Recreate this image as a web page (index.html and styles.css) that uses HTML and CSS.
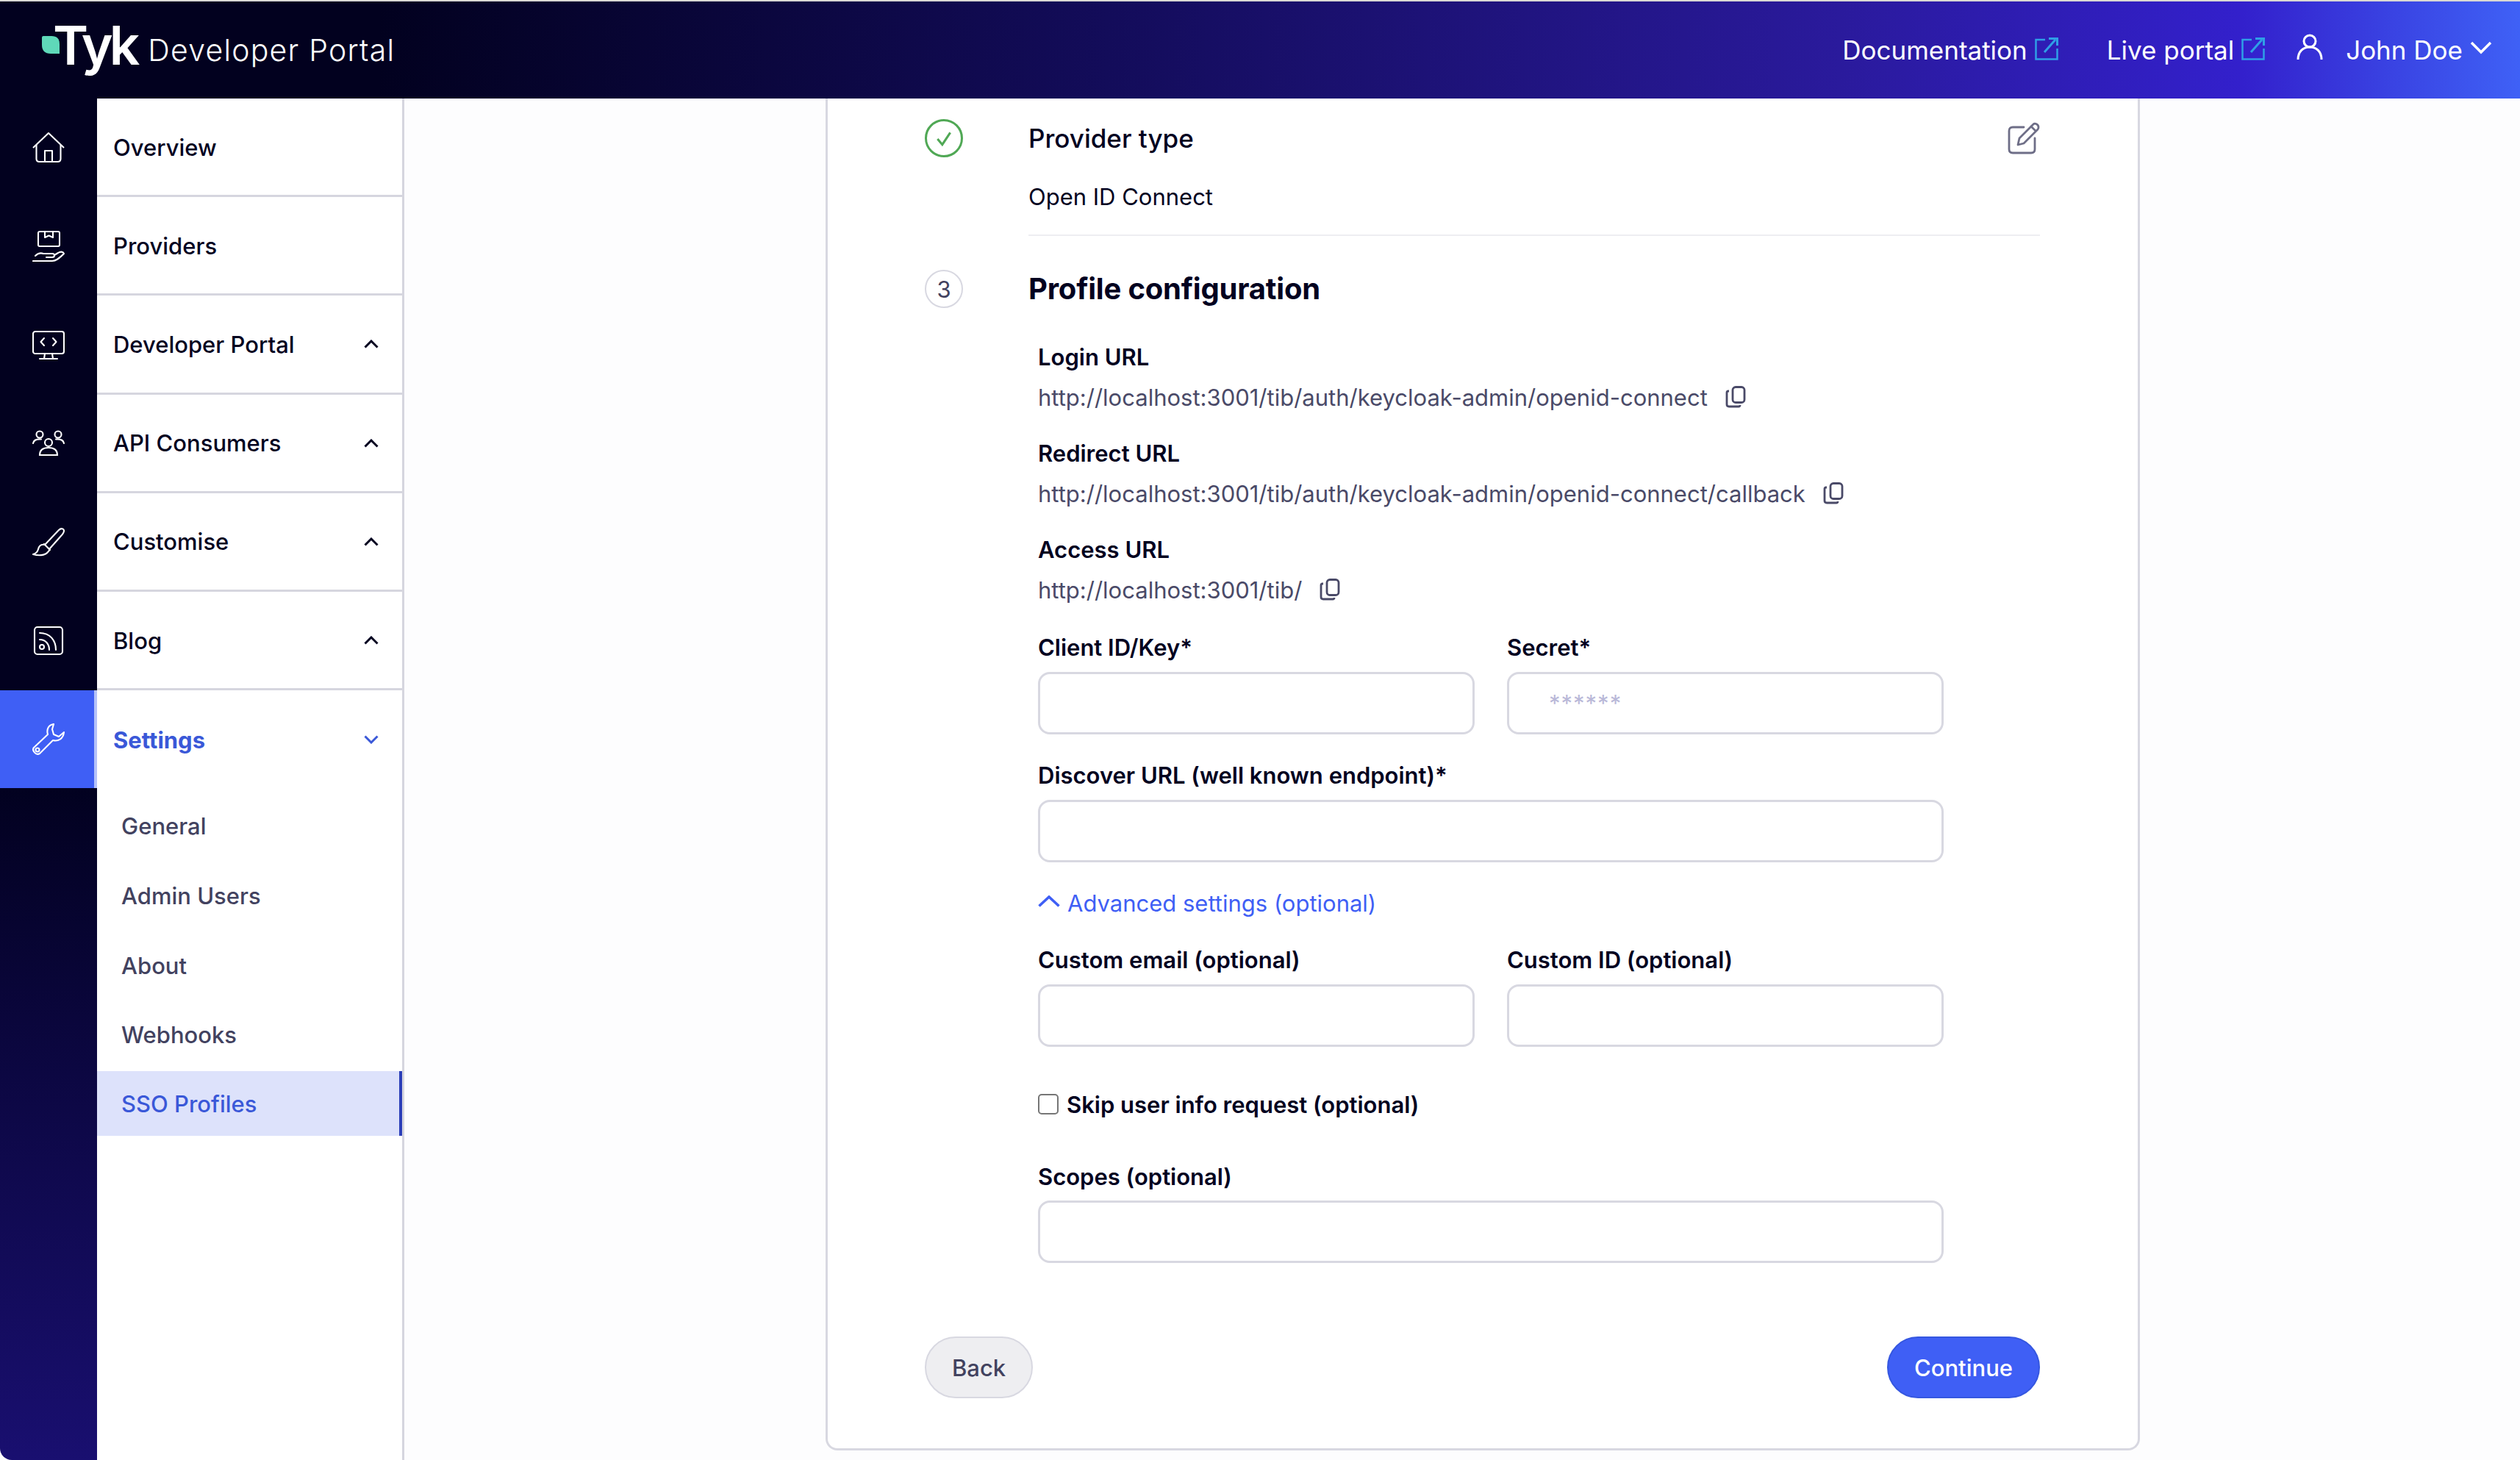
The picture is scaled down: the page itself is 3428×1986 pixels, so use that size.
FILE: index.html
```html
<!DOCTYPE html>
<html lang="en">
<head>
<meta charset="UTF-8">
<title>Tyk Developer Portal</title>
<link rel="stylesheet" href="styles.css">
</head>
<body>

<!-- TOP BAR -->
<header class="topbar">
    <div class="logo">
        <svg class="logo-leaf" viewBox="0 0 24 24"><path d="M0 2 Q0 0 2 0 H13 Q24 0 24 11 V24 H12 Q0 24 0 12 Z" fill="#5fd9b9"/></svg>
        <span class="logo-tyk">Tyk</span>
        <span class="logo-name">Developer Portal</span>
    </div>
    <nav class="top-links">
        <a class="top-link">Documentation
            <svg class="ext-icon" viewBox="0 0 32 32"><path d="M14 4 H1.5 V30.500 H30.500 V16" fill="none" stroke="#2f9fe6" stroke-width="2.500"/><path d="M13 21 L28 4 M19 2.500 H30.500 V12" fill="none" stroke="#2f9fe6" stroke-width="3"/></svg>
        </a>
        <a class="top-link">Live portal
            <svg class="ext-icon" viewBox="0 0 32 32"><path d="M14 4 H1.5 V30.500 H30.500 V16" fill="none" stroke="#2f9fe6" stroke-width="2.500"/><path d="M13 21 L28 4 M19 2.500 H30.500 V12" fill="none" stroke="#2f9fe6" stroke-width="3"/></svg>
        </a>
        <a class="top-user">
            <svg class="user-icon" viewBox="0 0 36 36"><circle cx="18" cy="10" r="8" fill="none" stroke="#fff" stroke-width="3"/><path d="M2 35 C2 24 9 18 18 18 C27 18 34 24 34 35" fill="none" stroke="#fff" stroke-width="3"/></svg>
            <span>John Doe</span>
            <svg class="user-chevron" viewBox="0 0 30 18"><path d="M2 2 L15 15 L28 2" fill="none" stroke="#fff" stroke-width="3.500"/></svg>
        </a>
    </nav>
</header>

<div class="app">

    <!-- ICON RAIL -->
    <aside class="rail">
        <div class="rail-item">
            <svg viewBox="0 0 44 44"><g fill="none" stroke="#fff" stroke-width="2.100" stroke-linejoin="round"><path d="M1 22 L22 2 L43 22"/><path d="M5.500 18 V37 Q5.500 41 9.500 41 H34.500 Q38.500 41 38.500 37 V18"/><path d="M17 41 V26 H27 V41"/></g></svg>
        </div>
        <div class="rail-item">
            <svg viewBox="0 0 44 44"><g fill="none" stroke="#fff" stroke-width="2.100" stroke-linejoin="round" stroke-linecap="round"><rect x="8" y="2" width="29" height="20" rx="2"/><path d="M17 3 V10 L22.500 7.500 L28 10 V3"/><path d="M1 42 H27 C32 42 36 39 43 32 C42 29 38 29 35 31 L30 34"/><path d="M4 35 C8 31 12 31 15 32 H27 C31 32 31 37 27 37 H19"/></g></svg>
        </div>
        <div class="rail-item">
            <svg viewBox="0 0 44 44"><g fill="none" stroke="#fff" stroke-width="2.100" stroke-linejoin="round" stroke-linecap="round"><rect x="1" y="4" width="42" height="30" rx="3"/><path d="M16 13 L11.500 18 L16 23 M28 13 L32.500 18 L28 23"/><path d="M17 34 L16 41 M27 34 L28 41 M10 41 H34"/></g></svg>
        </div>
        <div class="rail-item">
            <svg viewBox="0 0 44 44"><g fill="none" stroke="#fff" stroke-width="2.100" stroke-linecap="round"><circle cx="10" cy="9" r="4.500"/><circle cx="35" cy="9" r="4.500"/><circle cx="22" cy="20" r="5"/><path d="M1 21 C2 16 6 15 12 15.500 M43 21 C42 16 38 15 32 15.500"/><path d="M10 37 C10 30 15 27 22 27 C29 27 34 30 34 37 Z"/></g></svg>
        </div>
        <div class="rail-item">
            <svg viewBox="0 0 44 44"><g fill="none" stroke="#fff" stroke-width="2.100" stroke-linejoin="round" stroke-linecap="round"><path d="M17 25 L36 5 C39 2 43 3 43 6 C43 9 41 11 39 13 L23 31"/><path d="M17 25 C12 24 9 27 8 31 C7 35 5 37 1 38 C8 40 17 40 21 35 C23 33 24 31 23 31"/><path d="M16 24 L24 32"/></g></svg>
        </div>
        <div class="rail-item">
            <svg viewBox="0 0 44 44"><g fill="none" stroke="#fff" stroke-width="2.100" stroke-linecap="round"><rect x="3" y="3" width="38" height="37" rx="4"/><circle cx="13" cy="30" r="3"/><path d="M10 20 C18 20 23 26 23 34 M10 11 C24 11 32 21 32 34"/></g></svg>
        </div>
        <div class="rail-item rail-item-active">
            <svg viewBox="0 0 44 44"><g fill="none" stroke="#fff" stroke-width="2.100" stroke-linejoin="round"><path d="M29 1 C22 2 19 8 21 15 L2 33 C-1 37 5 44 10 41 L28 23 C35 25 42 21 43 12 L36 18 L29 15 L27 8 Z"/><circle cx="7" cy="36" r="2.500"/></g></svg>
        </div>
    </aside>

    <!-- SIDEBAR -->
    <nav class="sidebar">
        <a class="side-row">Overview</a>
        <a class="side-row">Providers</a>
        <a class="side-row">Developer Portal
            <svg class="side-chevron" viewBox="0 0 20 12"><path d="M1.500 10.500 L10 2 L18.500 10.500" fill="none" stroke="#02011f" stroke-width="3"/></svg>
        </a>
        <a class="side-row">API Consumers
            <svg class="side-chevron" viewBox="0 0 20 12"><path d="M1.500 10.500 L10 2 L18.500 10.500" fill="none" stroke="#02011f" stroke-width="3"/></svg>
        </a>
        <a class="side-row">Customise
            <svg class="side-chevron" viewBox="0 0 20 12"><path d="M1.500 10.500 L10 2 L18.500 10.500" fill="none" stroke="#02011f" stroke-width="3"/></svg>
        </a>
        <a class="side-row">Blog
            <svg class="side-chevron" viewBox="0 0 20 12"><path d="M1.500 10.500 L10 2 L18.500 10.500" fill="none" stroke="#02011f" stroke-width="3"/></svg>
        </a>
        <a class="side-row side-row-open">Settings
            <svg class="side-chevron" viewBox="0 0 20 12"><path d="M1.500 1.500 L10 10 L18.500 1.500" fill="none" stroke="#3a58d8" stroke-width="3"/></svg>
        </a>
        <div class="side-sub">
            <a class="sub-item">General</a>
            <a class="sub-item">Admin Users</a>
            <a class="sub-item">About</a>
            <a class="sub-item">Webhooks</a>
            <a class="sub-item sub-item-active">SSO Profiles</a>
        </div>
    </nav>

    <!-- MAIN -->
    <main class="main">
        <section class="card">

            <div class="step">
                <span class="step-badge step-badge-done">
                    <svg viewBox="0 0 24 24"><path d="M4 13 L10 20 L20 5" fill="none" stroke="#50a855" stroke-width="2.800"/></svg>
                </span>
                <div class="step-body step-body-done">
                    <div class="step-head">
                        <h3 class="step-title">Provider type</h3>
                        <svg class="edit-icon" viewBox="0 0 44 44"><g fill="none" stroke="#6e6e87" stroke-width="2.800" stroke-linejoin="round" stroke-linecap="round"><path d="M22 7 H7 Q2 7 2 12 V37 Q2 42 7 42 H32 Q37 42 37 37 V22"/><path d="M14 31 L16 22 L35 3 C37 1 42 3 42 7 C42 8 42 9 41 10 L22 29 Z"/><path d="M32 6 L38 12"/></g></svg>
                    </div>
                    <p class="step-value">Open ID Connect</p>
                </div>
            </div>

            <div class="step step-current">
                <span class="step-badge">3</span>
                <h2 class="step-heading">Profile configuration</h2>
            </div>

            <form class="form">
                <div class="url-block">
                    <div class="field-label">Login URL</div>
                    <div class="url-line">http://localhost:3001/tib/auth/keycloak-admin/openid-connect
                        <svg class="copy-icon" viewBox="0 0 30 30"><g fill="none" stroke="#4a4a68" stroke-width="2.800" stroke-linejoin="round"><rect x="11" y="1.500" width="16" height="21" rx="4"/><path d="M6 7 H5 Q3 7 3 9 V25 Q3 28 6 28 H19 Q21 28 21 26"/></g></svg>
                    </div>
                </div>
                <div class="url-block">
                    <div class="field-label">Redirect URL</div>
                    <div class="url-line">http://localhost:3001/tib/auth/keycloak-admin/openid-connect/callback
                        <svg class="copy-icon" viewBox="0 0 30 30"><g fill="none" stroke="#4a4a68" stroke-width="2.800" stroke-linejoin="round"><rect x="11" y="1.500" width="16" height="21" rx="4"/><path d="M6 7 H5 Q3 7 3 9 V25 Q3 28 6 28 H19 Q21 28 21 26"/></g></svg>
                    </div>
                </div>
                <div class="url-block">
                    <div class="field-label">Access URL</div>
                    <div class="url-line">http://localhost:3001/tib/
                        <svg class="copy-icon" viewBox="0 0 30 30"><g fill="none" stroke="#4a4a68" stroke-width="2.800" stroke-linejoin="round"><rect x="11" y="1.500" width="16" height="21" rx="4"/><path d="M6 7 H5 Q3 7 3 9 V25 Q3 28 6 28 H19 Q21 28 21 26"/></g></svg>
                    </div>
                </div>

                <div class="field-row field-row-first">
                    <div class="field">
                        <label class="field-label">Client ID/Key*</label>
                        <input class="text-input" type="text">
                    </div>
                    <div class="field">
                        <label class="field-label">Secret*</label>
                        <input class="text-input" type="text" placeholder="******">
                    </div>
                </div>

                <div class="field field-wide">
                    <label class="field-label">Discover URL (well known endpoint)*</label>
                    <input class="text-input" type="text">
                </div>

                <a class="advanced">
                    <svg class="advanced-chevron" viewBox="0 0 30 16"><path d="M1.500 14.500 L15 2 L28.500 14.500" fill="none" stroke="#3f5ff5" stroke-width="3.600"/></svg>
                    Advanced settings (optional)
                </a>

                <div class="field-row">
                    <div class="field">
                        <label class="field-label">Custom email (optional)</label>
                        <input class="text-input" type="text">
                    </div>
                    <div class="field">
                        <label class="field-label">Custom ID (optional)</label>
                        <input class="text-input" type="text">
                    </div>
                </div>

                <label class="check-row">
                    <input class="check-box" type="checkbox">
                    Skip user info request (optional)
                </label>

                <div class="field field-scopes">
                    <label class="field-label">Scopes (optional)</label>
                    <input class="text-input" type="text">
                </div>
            </form>

            <div class="actions">
                <button class="btn btn-back" type="button">Back</button>
                <button class="btn btn-continue" type="button">Continue</button>
            </div>
        </section>
    </main>
</div>

</body>
</html>
```

FILE: styles.css
```css
* {
    box-sizing: border-box;
}

body {
    margin: 0;
    height: 1986px;
    overflow: hidden;
    background: #fdfdfe;
    color: #02011f;
    font-family: "Inter", "Liberation Sans", sans-serif;
    font-size: 31px;
}

/* TOP BAR */
.topbar {
    height: 134px;
    border-top: 2px solid #d9d8d4;
    display: flex;
    align-items: center;
    justify-content: space-between;
    padding-right: 38px;
    background: linear-gradient(90deg, #02011f 0%, #02011f 15%, #130c5a 44%, #2a1a9c 73%, #3320cc 89%, #3f61f6 100%);
}

.logo {
    display: flex;
    align-items: center;
    padding-left: 57px;
    color: #fff;
}

.logo-leaf {
    width: 24px;
    height: 24px;
    margin-top: -14px;
}

.logo-tyk {
    font-size: 73px;
    font-weight: 600;
    letter-spacing: -5px;
    margin-left: -9px;
    margin-top: -14px;
}

.logo-name {
    font-size: 41px;
    font-weight: 280;
    letter-spacing: 1.200px;
    margin-left: 16px;
}

.top-links {
    display: flex;
    align-items: center;
    color: #fff;
    font-size: 35px;
}

.top-link {
    display: flex;
    align-items: center;
    gap: 10px;
    margin-right: 66px;
}

.top-link:nth-child(2) {
    margin-right: 43px;
}

.ext-icon {
    width: 32px;
    height: 32px;
    margin-top: -4px;
}

.top-user {
    display: flex;
    align-items: center;
}

.user-icon {
    width: 36px;
    height: 36px;
    margin-top: -8px;
    margin-right: 31px;
}

.user-chevron {
    width: 30px;
    height: 18px;
    margin-left: 10px;
    margin-top: -6px;
}

.app {
    display: flex;
    height: 1852px;
}

/* ICON RAIL */
.rail {
    width: 132px;
    flex: none;
    background: linear-gradient(180deg, #02011f 50%, #190f70 100%);
    border-bottom-left-radius: 16px;
}

.rail-item {
    height: 134.200px;
    display: flex;
    align-items: center;
    justify-content: center;
}

.rail-item svg {
    width: 44px;
    height: 44px;
}

.rail-item-active {
    height: 133px;
    background: #3f5ff5;
    border-right: 4px solid #b4c2f9;
    padding-left: 4px;
}

/* SIDEBAR */
.sidebar {
    width: 418px;
    flex: none;
    background: #fff;
    border-right: 3px solid #d6d6df;
}

.side-row {
    height: 134.200px;
    display: flex;
    align-items: center;
    justify-content: space-between;
    padding: 1px 32px 0 22px;
    border-bottom: 3px solid #d6d6df;
    font-weight: 500;
}

.side-row-open {
    border-bottom: none;
    padding-top: 0;
    color: #3a58d8;
    font-weight: 700;
}

.side-chevron {
    width: 20px;
    height: 12px;
}

.side-sub {
    padding-top: 3px;
}

.sub-item {
    height: 94.700px;
    display: flex;
    align-items: center;
    padding-left: 33px;
    color: #42425f;
    font-weight: 500;
}

.sub-item-active {
    height: 88px;
    margin-top: 2px;
    background: #dde2fb;
    border-right: 4px solid #2c3fb8;
    color: #3a58d8;
}

/* MAIN */
.main {
    flex: 1;
    padding-left: 573px;
}

.card {
    width: 1788px;
    height: 1839px;
    background: #fff;
    border: 3px solid #d8d8e1;
    border-top: none;
    border-radius: 0 0 16px 16px;
    padding: 28px 133px 0 132px;
}

.step {
    display: flex;
}

.step-badge {
    width: 52px;
    height: 52px;
    flex: none;
    border: 2px solid #d8d8e1;
    border-radius: 50%;
    display: flex;
    align-items: center;
    justify-content: center;
    color: #42425f;
}

.step-badge-done {
    border: 3px solid #50a855;
}

.step-badge-done svg {
    width: 26px;
    height: 26px;
}

.step-body {
    flex: 1;
    margin-left: 89px;
}

.step-body-done {
    height: 159px;
    border-bottom: 2px solid #eeeef2;
}

.step-head {
    height: 52px;
    display: flex;
    align-items: center;
    justify-content: space-between;
}

.step-title {
    margin: 0;
    font-size: 35px;
    font-weight: 500;
}

.edit-icon {
    width: 44px;
    height: 44px;
}

.step-value {
    margin: 34px 0 0;
    line-height: 40px;
}

.step-current {
    margin-top: 46px;
    align-items: center;
}

.step-heading {
    margin: -2px 0 0 89px;
    font-size: 40px;
    font-weight: 700;
    letter-spacing: -0.200px;
}

.form {
    margin-left: 154px;
    width: 1232px;
    padding-top: 47px;
}

.field-label {
    display: block;
    height: 40px;
    line-height: 40px;
    font-weight: 600;
}

.url-block {
    margin-bottom: 37px;
}

.url-line {
    display: flex;
    align-items: center;
    gap: 23px;
    height: 40px;
    margin-top: 14px;
    color: #4a4a68;
}

.copy-icon {
    width: 30px;
    height: 30px;
}

.field-row {
    display: grid;
    grid-template-columns: 594px 594px;
    gap: 44px;
}

.field-row-first {
    margin-top: 39px;
}

.text-input {
    display: block;
    width: 100%;
    height: 85px;
    margin-top: 13px;
    padding: 0 54px 1px;
    background: #fff;
    border: 3px solid #d8d8e1;
    border-radius: 16px;
    font-family: inherit;
    font-size: 31px;
    letter-spacing: 1px;
    outline: none;
}

.text-input::placeholder {
    color: #b9b8d8;
    opacity: 1;
}

.field-wide {
    margin-top: 36px;
}

.advanced {
    display: flex;
    align-items: center;
    gap: 10px;
    height: 40px;
    margin-top: 35px;
    color: #3f5ff5;
}

.advanced-chevron {
    width: 30px;
    height: 16px;
    margin-top: -4px;
}

.advanced + .field-row {
    margin-top: 38px;
}

.check-row {
    display: flex;
    align-items: center;
    gap: 11px;
    height: 40px;
    margin-top: 58px;
    font-weight: 600;
}

.check-box {
    appearance: none;
    width: 28px;
    height: 28px;
    margin: 0;
    background: #fff;
    border: 2px solid #767676;
    border-radius: 5px;
}

.field-scopes {
    margin-top: 59px;
}

.field-scopes .text-input {
    margin-top: 12px;
}

.actions {
    display: flex;
    justify-content: space-between;
    margin-top: 100px;
}

.btn {
    height: 84px;
    padding: 0 35px;
    border-radius: 42px;
    font-family: inherit;
    font-size: 31px;
    font-weight: 500;
}

.btn-back {
    background: #eeeef1;
    border: 2px solid #d8d8e1;
    color: #42425f;
}

.btn-continue {
    background: #3f5ff5;
    border: 2px solid #3557e0;
    color: #fff;
}
```
